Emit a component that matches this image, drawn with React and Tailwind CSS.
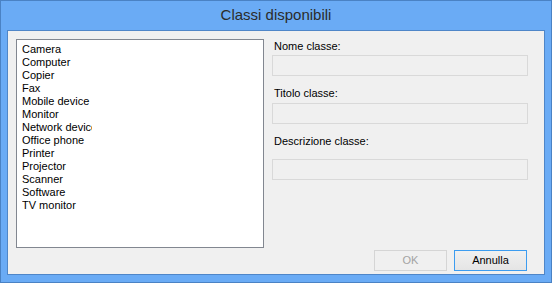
export default function App() {
    const classes = ['Camera', 'Computer', 'Copier', 'Fax', 'Mobile device', 'Monitor', 'Network device', 'Office phone', 'Printer', 'Projector', 'Scanner', 'Software', 'TV monitor']
    const fields = [
        { label: 'Nome classe:', mt: 'mt-0', gap: 'mt-[2px]' },
        { label: 'Titolo classe:', mt: 'mt-[10px]', gap: 'mt-[3px]' },
        { label: 'Descrizione classe:', mt: 'mt-[10px]', gap: 'mt-[11px]' },
    ]

    return (
        <div className="w-[552px] h-[283px] border border-[#4a82c4] bg-[#6aabf5] flex flex-col" style={{ fontFamily: '"Liberation Sans", Arial, sans-serif' }}>
            <div className="h-[29px] flex items-center justify-center text-[15px] text-[#2b2b2b] pb-[1px]">
                Classi disponibili
            </div>
            <div className="mx-[6px] h-[245px] border border-[#4f86c8] bg-[#f0f0f0] flex flex-col">
                <div className="flex pt-[8px] pl-[8px]">
                    <div className="w-[248px] h-[209px] border border-[#828790] bg-white pt-[3px] pl-[5px]">
                        {classes.map(c => (
                            <div key={c} className="h-[13px] leading-[13px] text-[11px] text-black w-[70px] overflow-hidden whitespace-nowrap">{c}</div>
                        ))}
                    </div>
                    <div className="ml-[8px] flex flex-col w-[256px]">
                        {fields.map(f => (
                            <div key={f.label} className={f.mt}>
                                <div className="h-[14px] leading-[14px] text-[11px] text-black pl-[2px]">{f.label}</div>
                                <div className={`${f.gap} h-[21px] border border-[#d9d9d9] bg-[#f0f0f0]`}></div>
                            </div>
                        ))}
                    </div>
                </div>
                <div className="flex justify-end gap-[7px] mt-[2px] pr-[17px]">
                    <button className="w-[73px] h-[21px] border border-[#d5d5d5] bg-[#f0f0f0] text-[11px] text-[#a3a3a3]">OK</button>
                    <button className="w-[73px] h-[21px] border border-[#3c9cf0] bg-gradient-to-b from-[#f0f0f0] to-[#e5e5e5] text-[11px] text-black">Annulla</button>
                </div>
            </div>
        </div>
    )
}
